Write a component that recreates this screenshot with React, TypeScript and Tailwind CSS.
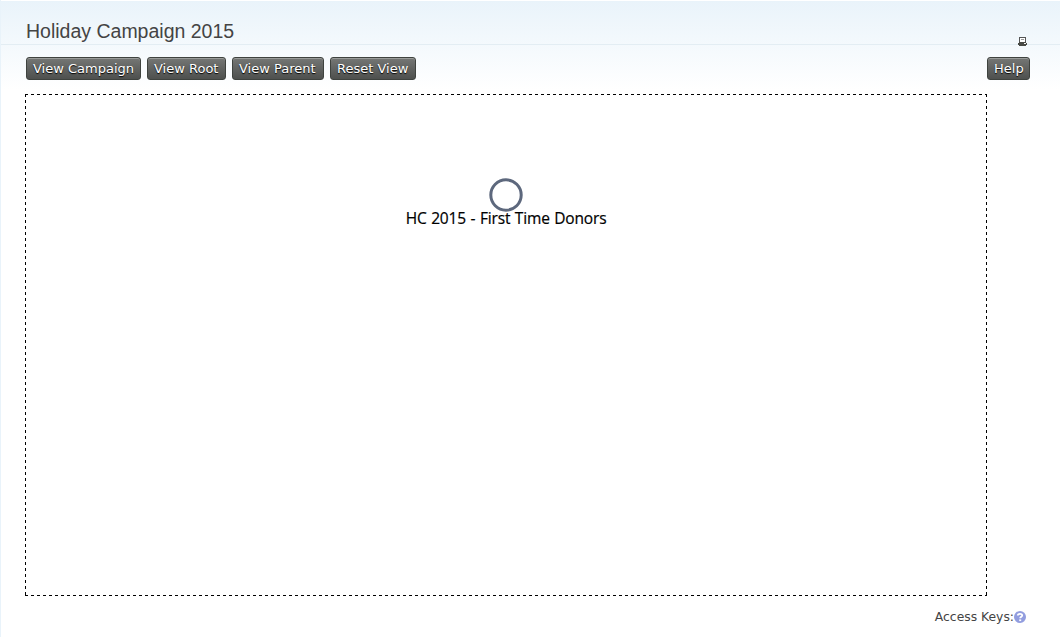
import type { ReactNode } from "react";

function ToolButton({ children, width }: { children: ReactNode; width: string }) {
  return (
    <button
      className={`${width} flex h-[23px] shrink-0 items-center whitespace-nowrap rounded-[3px] border border-[#3f433f] bg-linear-to-b from-[#757775] to-[#4e504e] pb-px pl-1.5 font-['DejaVu_Sans',sans-serif] text-[13px] leading-none text-white shadow-[inset_0_1px_0_#9a9c9a] [text-shadow:0_1px_1px_#000]`}
    >
      {children}
    </button>
  );
}

function PrinterIcon() {
  return (
    <svg width="10" height="10" viewBox="0 0 10 10" aria-label="Print" shapeRendering="crispEdges">
      <path d="M1 1h7v5H1z" fill="#555" />
      <path d="M2 2h5v4H2z" fill="#fff" />
      <path d="M3 3h3v1H3z" fill="#999" />
      <path d="M1 6h7v1h1v2H8v1H1V9H0V7h1z" fill="#494a45" />
      <path d="M6 7h2v1H6z" fill="#f5f5f5" />
    </svg>
  );
}

function HelpIcon() {
  return (
    <svg width="12" height="12" viewBox="0 0 12 12" aria-label="Help">
      <circle cx="6" cy="6" r="6" fill="#929ddf" />
      <path d="M3.8 4.5C3.8 2.3 8.2 2.2 8.2 4.5C8.2 5.8 6.2 5.8 6.2 7.3" fill="none" stroke="#fff" strokeWidth="1.8" />
      <path d="M5.2 8.4h2v1.7h-2z" fill="#fff" />
    </svg>
  );
}

export default function App() {
  return (
    <div className="flex h-[637px] w-[1060px] flex-col overflow-hidden border-l border-[#e9f3fa] bg-white bg-linear-to-b from-[#e9f3fa] to-white bg-[length:100%_90px] bg-no-repeat">
      <header className="flex h-[45px] shrink-0 items-start justify-between border-t border-b border-t-white border-b-[#e3edf3] pl-[25px] pr-8">
        <h1 className="mt-[19px] font-['Liberation_Sans',sans-serif] text-[19.5px] leading-[22px] text-[#444]">
          Holiday Campaign 2015
        </h1>
        <div className="mt-[35px]">
          <PrinterIcon />
        </div>
      </header>
      <nav className="mt-3 flex shrink-0 gap-1.5 pl-[25px] pr-[30px]">
        <ToolButton width="w-[115px]">View Campaign</ToolButton>
        <ToolButton width="w-[79px]">View Root</ToolButton>
        <ToolButton width="w-[92px]">View Parent</ToolButton>
        <ToolButton width="w-[86px]">Reset View</ToolButton>
        <div className="ml-auto">
          <ToolButton width="w-[43px]">Help</ToolButton>
        </div>
      </nav>
      <main className="ml-6 mt-3.5 flex h-[502px] w-[962px] shrink-0 flex-col items-center bg-white bg-[image:linear-gradient(90deg,#000_50%,transparent_50%),linear-gradient(90deg,#000_50%,transparent_50%),linear-gradient(#000_50%,transparent_50%),linear-gradient(#000_50%,transparent_50%)] bg-[length:6px_1px,6px_1px,1px_6px,1px_6px] bg-[position:left_top,left_bottom,left_top,right_top] [background-repeat:repeat-x,repeat-x,repeat-y,repeat-y] pt-[84px]">
        <svg width="34" height="34" viewBox="0 0 34 34">
          <circle cx="17" cy="17" r="15.2" fill="#fff" stroke="#5d687d" strokeWidth="3" />
        </svg>
        <span className="-mt-1 whitespace-nowrap font-['Open_Sans',sans-serif] text-[15.5px] leading-5 tracking-[-0.18px] text-black [-webkit-text-stroke:0.2px_#000] [word-spacing:0.8px]">
          HC 2015 - First Time Donors
        </span>
      </main>
      <footer className="mt-3.5 flex items-center justify-end pr-[34px] font-['DejaVu_Sans',sans-serif] text-[12.35px] leading-[14px] text-[#444]">
        <span>Access Keys:</span>
        <HelpIcon />
      </footer>
    </div>
  );
}
